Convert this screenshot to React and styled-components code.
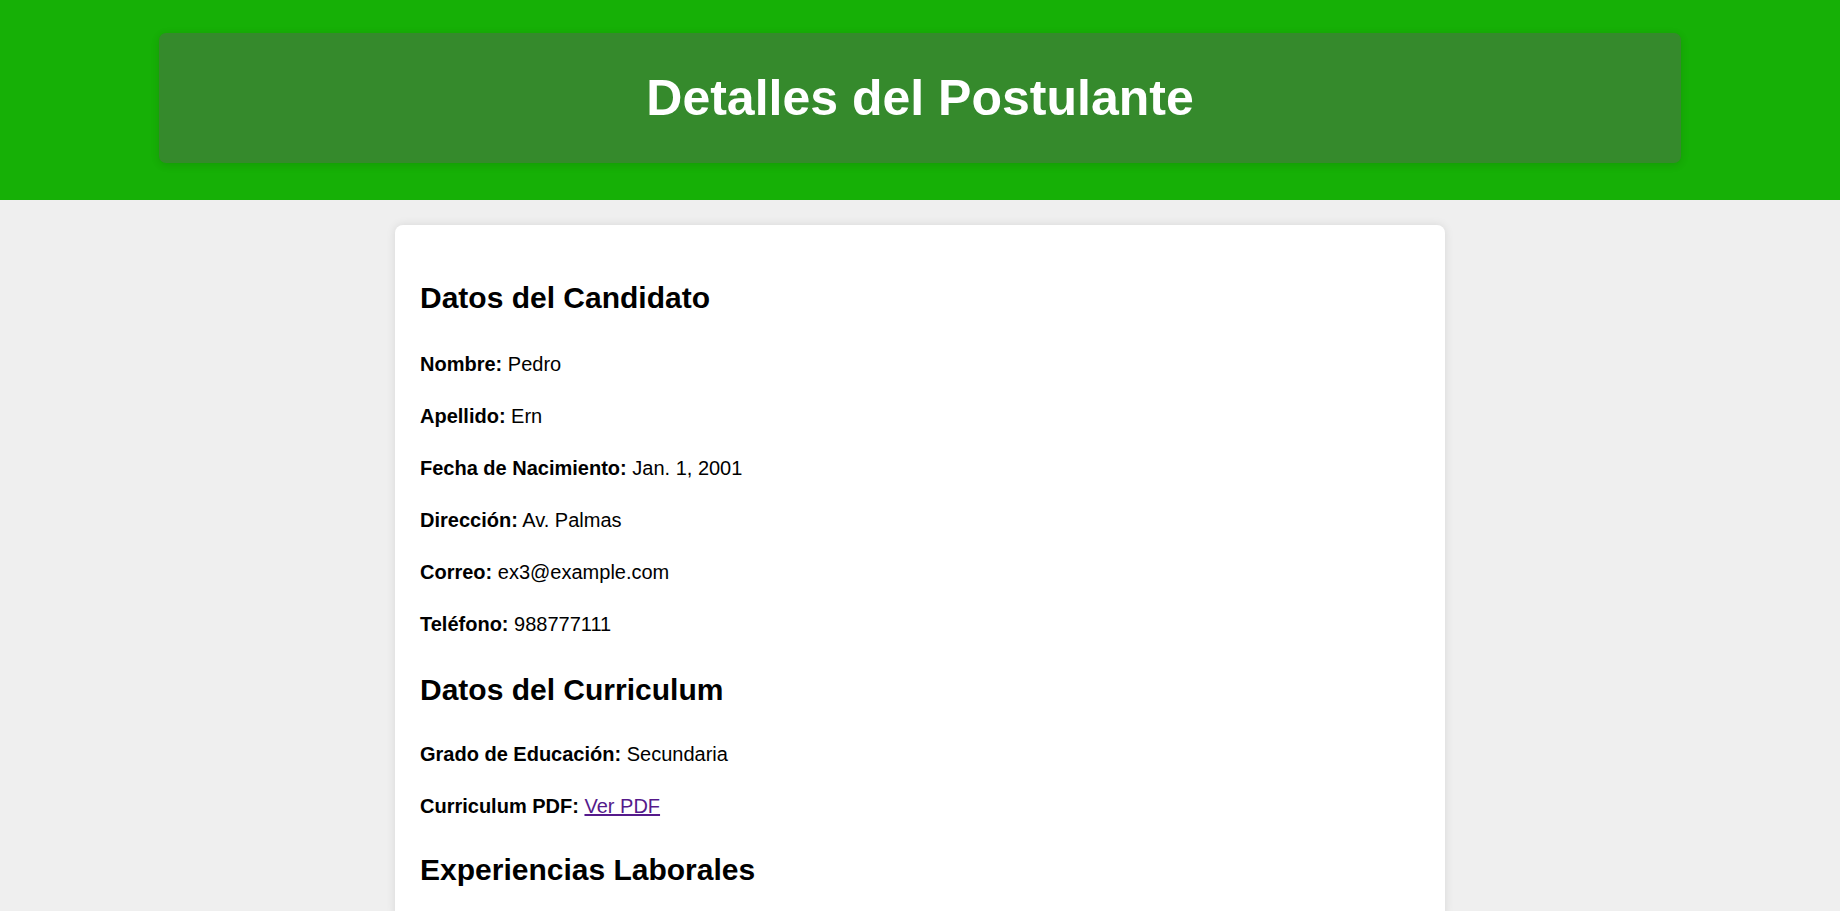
import React from "react";
import styled, { createGlobalStyle } from "styled-components";

const GlobalStyle = createGlobalStyle`
  html, body {
    margin: 0;
    padding: 0;
    background: #efefef;
    font-family: "Liberation Sans", Arial, sans-serif;
    color: #000;
  }
`;

const HeaderBand = styled.header`
  background: #16b006;
  padding: 33px 159px 37px;
`;

const TitleBox = styled.div`
  background: #358a2c;
  border-radius: 7px;
  height: 130px;
  display: flex;
  align-items: center;
  justify-content: center;
  box-shadow: 0 2px 8px rgba(0, 0, 0, 0.12);
`;

const Title = styled.h1`
  margin: 0;
  color: #fff;
  font-size: 50px;
  font-weight: bold;
  line-height: 1;
`;

const Main = styled.main`
  padding-top: 25px;
  display: flex;
  justify-content: center;
`;

const Card = styled.div`
  width: 1050px;
  box-sizing: border-box;
  background: #fff;
  border-radius: 8px;
  box-shadow: 0 0 10px rgba(0, 0, 0, 0.1);
  padding: 49px 25px 25px;
  display: flex;
  flex-direction: column;
`;

const Section = styled.section`
  display: flex;
  flex-direction: column;
  gap: 20px;
  margin-bottom: ${(p) => p.$after}px;
`;

const SectionTitle = styled.h2`
  margin: 0 0 ${(p) => p.$space ?? 6}px;
  font-size: 30px;
  font-weight: bold;
  line-height: 48px;
`;

const Field = styled.p`
  margin: 0;
  font-size: 20px;
  line-height: 32px;
`;

const Label = styled.strong`
  font-weight: bold;
`;

const Link = styled.a`
  color: #551a8b;
  text-decoration: underline;
`;

const candidate = [
  ["Nombre:", "Pedro"],
  ["Apellido:", "Ern"],
  ["Fecha de Nacimiento:", "Jan. 1, 2001"],
  ["Dirección:", "Av. Palmas"],
  ["Correo:", "ex3@example.com"],
  ["Teléfono:", "988777111"],
];

export default function App() {
  return (
    <>
      <GlobalStyle />
      <HeaderBand>
        <TitleBox>
          <Title>Detalles del Postulante</Title>
        </TitleBox>
      </HeaderBand>
      <Main>
        <Card>
          <Section $after={26}>
            <SectionTitle $space={6}>Datos del Candidato</SectionTitle>
            {candidate.map(([l, v]) => (
              <Field key={l}>
                <Label>{l}</Label> {v}
              </Field>
            ))}
          </Section>
          <Section $after={24}>
            <SectionTitle $space={4}>Datos del Curriculum</SectionTitle>
            <Field>
              <Label>Grado de Educación:</Label> Secundaria
            </Field>
            <Field>
              <Label>Curriculum PDF:</Label> <Link href="#">Ver PDF</Link>
            </Field>
          </Section>
          <Section $after={0}>
            <SectionTitle $space={0}>Experiencias Laborales</SectionTitle>
          </Section>
        </Card>
      </Main>
    </>
  );
}
